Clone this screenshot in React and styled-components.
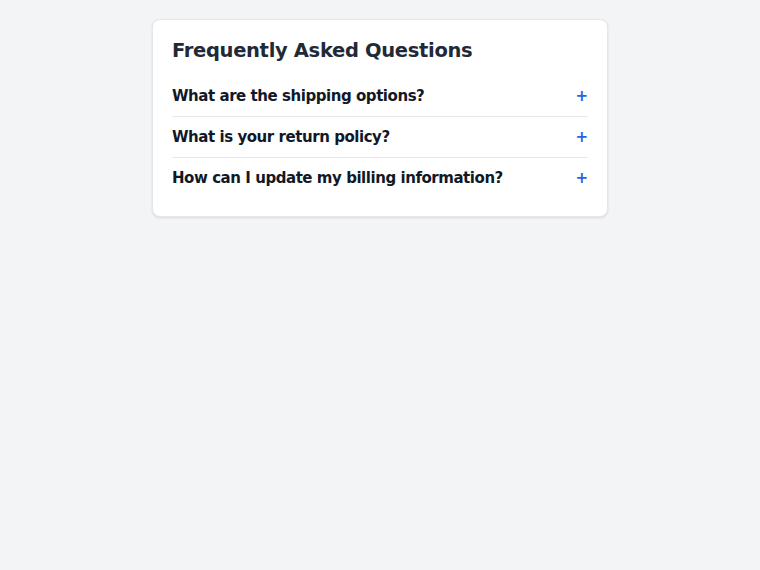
import React from "react";
import styled, { createGlobalStyle } from "styled-components";

const GlobalStyle = createGlobalStyle`
  html, body {
    margin: 0;
    background: #f3f4f6;
    font-family: "DejaVu Sans", "Liberation Sans", sans-serif;
  }
`;

const questions = [
  "What are the shipping options?",
  "What is your return policy?",
  "How can I update my billing information?",
];

export default function App() {
  return (
    <>
      <GlobalStyle />
      <Page>
        <Card>
          <Title>Frequently Asked Questions</Title>
          <List>
            {questions.map((q) => (
              <Item key={q}>
                <Question>{q}</Question>
                <Toggle>+</Toggle>
              </Item>
            ))}
          </List>
        </Card>
      </Page>
    </>
  );
}

const Page = styled.main`
  min-height: 100vh;
  padding-top: 19px;
  box-sizing: border-box;
`;

const Card = styled.section`
  width: 456px;
  box-sizing: border-box;
  margin: 0 auto;
  padding: 17px 19px 18px;
  background: #ffffff;
  border: 1px solid #e5e7eb;
  border-radius: 8px;
  box-shadow: 0 1px 3px rgba(0, 0, 0, 0.08), 0 1px 2px rgba(0, 0, 0, 0.04);
`;

const Title = styled.h2`
  margin: 0 0 11px;
  font-size: 19.5px;
  line-height: 28px;
  font-weight: 700;
  letter-spacing: -0.32px;
  color: #1f2937;
`;

const List = styled.ul`
  list-style: none;
  margin: 0;
  padding: 0;
`;

const Item = styled.li`
  display: flex;
  align-items: center;
  justify-content: space-between;
  padding: 8px 0;
  border-bottom: 1px solid #e5e7eb;
  &:last-child {
    border-bottom: none;
  }
`;

const Question = styled.span`
  font-size: 15px;
  line-height: 24px;
  font-weight: 700;
  letter-spacing: -0.45px;
  color: #111827;
`;

const Toggle = styled.span`
  font-size: 15px;
  line-height: 24px;
  font-weight: 700;
  color: #2563eb;
`;
